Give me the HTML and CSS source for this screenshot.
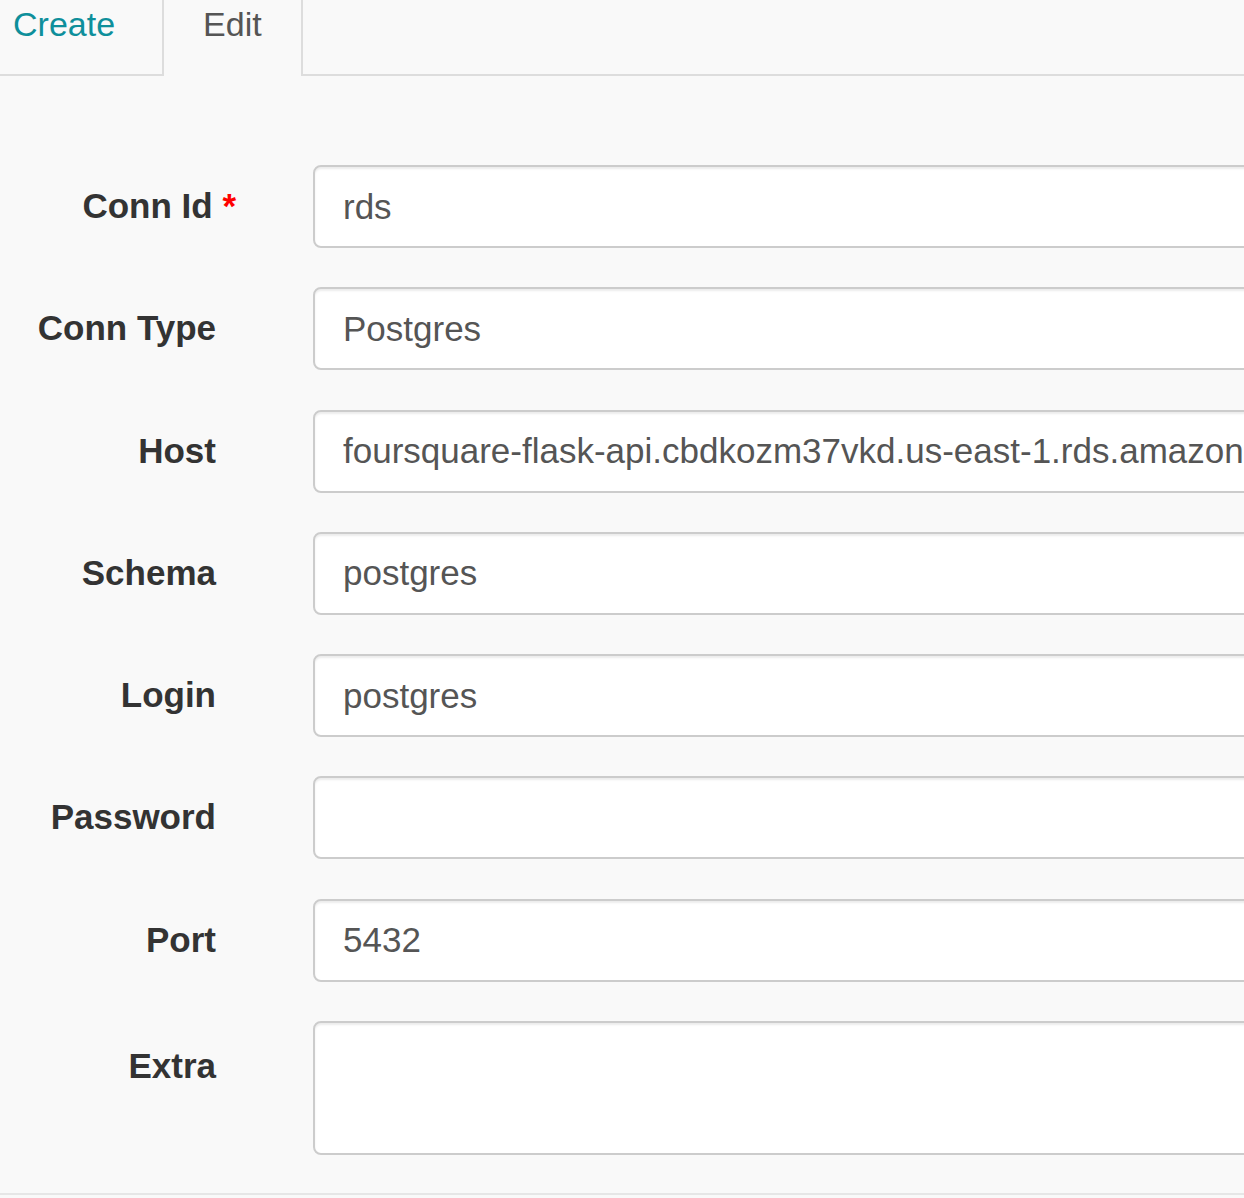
FILE: index.html
```html
<!DOCTYPE html>
<html lang="en">
<head>
<meta charset="utf-8">
<title>Edit Connection</title>
<link rel="stylesheet" href="styles.css">
</head>
<body>
<div class="page">
  <ul class="tabs">
    <li class="tab"><a class="tab-link" href="#">Create</a></li>
    <li class="tab active"><a class="tab-link" href="#">Edit</a></li>
  </ul>
  <form class="form">
    <div class="row">
      <label class="label">Conn Id <span class="req">*</span></label>
      <input class="control" type="text" value="rds">
    </div>
    <div class="row">
      <label class="label">Conn Type</label>
      <input class="control" type="text" value="Postgres">
    </div>
    <div class="row">
      <label class="label">Host</label>
      <input class="control" type="text" value="foursquare-flask-api.cbdkozm37vkd.us-east-1.rds.amazonaws.com">
    </div>
    <div class="row">
      <label class="label">Schema</label>
      <input class="control" type="text" value="postgres">
    </div>
    <div class="row">
      <label class="label">Login</label>
      <input class="control" type="text" value="postgres">
    </div>
    <div class="row">
      <label class="label">Password</label>
      <input class="control" type="password" value="">
    </div>
    <div class="row">
      <label class="label">Port</label>
      <input class="control" type="text" value="5432">
    </div>
    <div class="row">
      <label class="label label-area">Extra</label>
      <textarea class="control area"></textarea>
    </div>
  </form>
</div>
</body>
</html>
```

FILE: styles.css
```css
html, body {
  margin: 0;
  padding: 0;
  background: #f9f9f9;
  overflow: hidden;
}

body {
  font-family: "Liberation Sans", Arial, Helvetica, sans-serif;
  font-size: 34px;
  color: #333;
}

.page {
  width: 1244px;
  height: 1198px;
  overflow: hidden;
}

.tabs {
  list-style: none;
  margin: -10px 0 0 -28px;
  padding: 0;
  display: flex;
  border-bottom: 2px solid #dddddd;
  height: 84px;
}

.tab {
  margin-right: 6px;
  margin-bottom: -2px;
  border: 2px solid transparent;
  border-bottom: none;
}

.tab-link {
  display: block;
  padding: 12px 39px 0;
  height: 74px;
  line-height: 40px;
  text-decoration: none;
  color: #0e8f9b;
}

.tab.active {
  border-color: #dddddd;
  background: #f9f9f9;
  border-radius: 8px 8px 0 0;
}

.tab.active .tab-link {
  color: #555555;
  height: 76px;
}

.form {
  margin: 0;
  padding: 89px 0 38px;
  border-bottom: 2px solid #e6e6e6;
}

.row {
  display: flex;
  align-items: flex-start;
  margin-bottom: 39.3px;
}

.row:last-child {
  margin-bottom: 0;
}

.label {
  flex: 0 0 216px;
  width: 216px;
  box-sizing: border-box;
  padding-top: 21px;
  line-height: 40px;
  font-size: 35px;
  text-align: right;
  font-weight: bold;
  color: #333;
  white-space: nowrap;
}

.label-area {
  padding-top: 25px;
}

.req {
  color: #ff0000;
  font-weight: bold;
  margin-right: -20px;
}

.control {
  display: block;
  margin-left: 97px;
  flex: 0 0 1100px;
  width: 1100px;
  height: 83px;
  box-sizing: border-box;
  padding: 0 28px;
  font-family: inherit;
  font-size: 35px;
  color: #555555;
  background: #ffffff;
  border: 2px solid #cccccc;
  border-radius: 8px;
  box-shadow: inset 0 2px 2px rgba(0, 0, 0, 0.075);
  outline: none;
}

.area {
  height: 134px;
  resize: none;
  padding: 12px 28px;
}
```
